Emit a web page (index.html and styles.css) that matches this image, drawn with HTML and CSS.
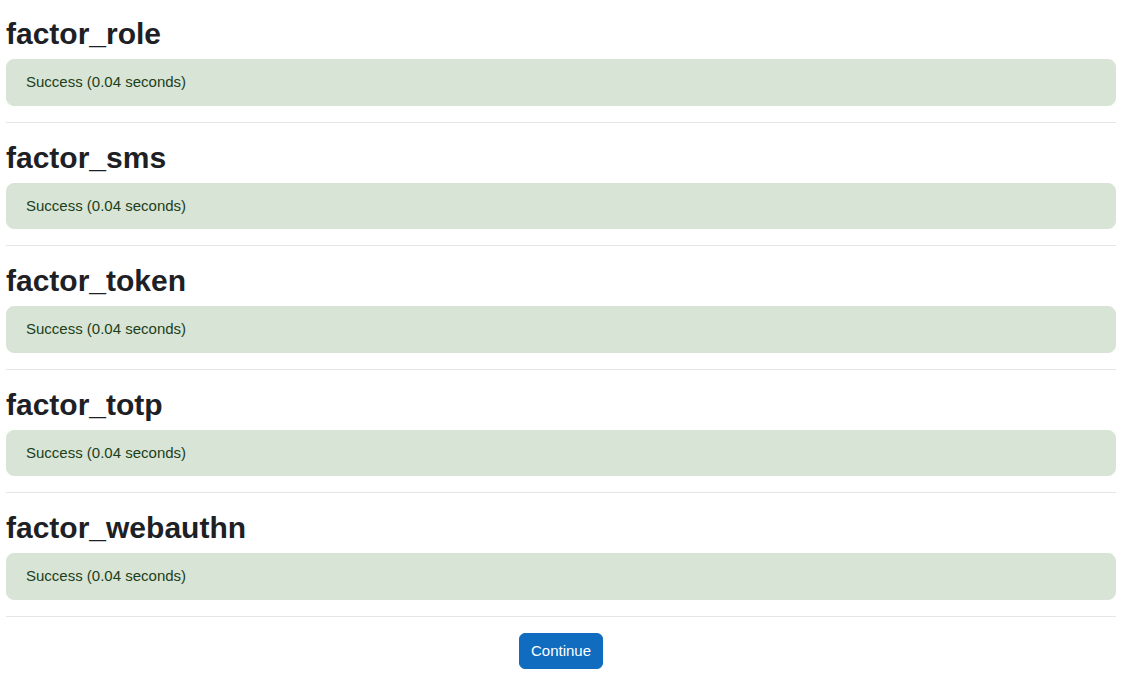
FILE: index.html
```html
<!DOCTYPE html>
<html lang="en">
<head>
  <meta charset="UTF-8" />
  <title>Upgrade results</title>
  <link rel="stylesheet" href="styles.css">
</head>
<body>

<div id="page">
  <h2>factor_role</h2>
  <div class="alert-success">Success (0.04 seconds)</div>
  <hr>

  <h2>factor_sms</h2>
  <div class="alert-success">Success (0.04 seconds)</div>
  <hr>

  <h2>factor_token</h2>
  <div class="alert-success">Success (0.04 seconds)</div>
  <hr>

  <h2>factor_totp</h2>
  <div class="alert-success">Success (0.04 seconds)</div>
  <hr>

  <h2>factor_webauthn</h2>
  <div class="alert-success">Success (0.04 seconds)</div>
  <hr>

  <div class="continue-row">
    <button class="btn-primary">Continue</button>
  </div>
</div>

</body>
</html>
```

FILE: styles.css
```css
body {
  font-family: "Liberation Sans", Arial, sans-serif;
  font-size: 15px;
  line-height: 1.5;
  color: #1d2125;
  background: #fff;
  margin: 0;
  padding: 0;
}
#page {
  padding: 15px 5px 20px 6px;
}
h2 {
  font-size: 30px;
  font-weight: bold;
  line-height: 1.2;
  padding-top: 1px;
  margin: 0 0 7px 0;
}
.alert-success {
  background: #d8e4d6;
  color: #1c3f1a;
  border: 1px solid #d8e4d6;
  border-radius: 8px;
  padding: 11px 19px;
  margin-bottom: 16px;
}
hr {
  border: 0;
  border-top: 1px solid #e6e6e6;
  margin: 16px 0;
}
.continue-row {
  text-align: center;
}
.btn-primary {
  font-family: inherit;
  font-size: 15px;
  line-height: 1.5;
  padding: 6px 11px;
  color: #fff;
  background-color: #0f6cbf;
  border: 1px solid #0f6cbf;
  border-radius: 6px;
  cursor: pointer;
}
```
